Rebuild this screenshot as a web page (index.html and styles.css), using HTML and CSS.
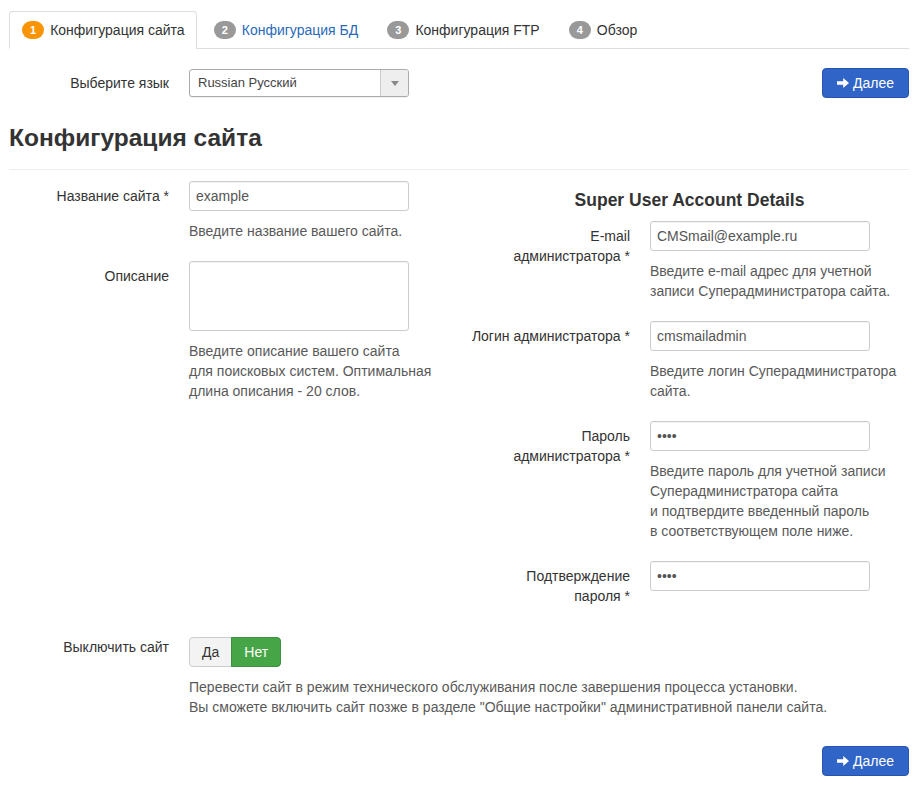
FILE: index.html
```html
<!DOCTYPE html>
<html lang="ru">
<head>
<meta charset="utf-8">
<title>Конфигурация сайта</title>
<link rel="stylesheet" href="styles.css">
</head>
<body>
<div class="page">
  <ul class="tabs">
    <li class="tab active"><span class="badge badge-warn">1</span>Конфигурация сайта</li>
    <li class="tab"><span class="badge">2</span><a class="tab-link" href="#">Конфигурация БД</a></li>
    <li class="tab"><span class="badge">3</span>Конфигурация FTP</li>
    <li class="tab"><span class="badge">4</span>Обзор</li>
  </ul>

  <div class="lang-row">
    <div class="inline-group">
      <label class="lbl lbl-plain">Выберите язык</label>
      <div class="select">
        <span class="select-text">Russian Русский</span>
        <span class="select-arrow"><span class="caret"></span></span>
      </div>
    </div>
    <button class="btn btn-primary" type="button">
      <svg class="arrow" width="12" height="10" viewBox="0 0 12 10"><path d="M0 3.3h6.2V0L12 5l-5.8 5V6.7H0z" fill="#fff"/></svg>
      Далее
    </button>
  </div>

  <h3 class="title">Конфигурация сайта</h3>
  <hr class="divider">

  <div class="cols">
    <div class="col col-left">
      <div class="group">
        <label class="lbl">Название сайта *</label>
        <div class="controls">
          <input class="field" type="text" value="example">
          <p class="help">Введите название вашего сайта.</p>
        </div>
      </div>
      <div class="group">
        <label class="lbl">Описание</label>
        <div class="controls">
          <textarea class="field area"></textarea>
          <p class="help">Введите описание вашего сайта<br>для поисковых систем. Оптимальная<br>длина описания - 20 слов.</p>
        </div>
      </div>
    </div>

    <div class="col col-right">
      <h4 class="sub">Super User Account Details</h4>
      <div class="group">
        <label class="lbl">E-mail<br>администратора *</label>
        <div class="controls">
          <input class="field" type="text" value="CMSmail@example.ru">
          <p class="help">Введите e-mail адрес для учетной<br>записи Суперадминистратора сайта.</p>
        </div>
      </div>
      <div class="group">
        <label class="lbl nowrap">Логин администратора *</label>
        <div class="controls">
          <input class="field" type="text" value="cmsmailadmin">
          <p class="help">Введите логин Суперадминистратора<br>сайта.</p>
        </div>
      </div>
      <div class="group">
        <label class="lbl">Пароль<br>администратора *</label>
        <div class="controls">
          <input class="field" type="password" value="1234">
          <p class="help">Введите пароль для учетной записи<br>Суперадминистратора сайта<br>и подтвердите введенный пароль<br>в соответствующем поле ниже.</p>
        </div>
      </div>
      <div class="group">
        <label class="lbl">Подтверждение<br>пароля *</label>
        <div class="controls">
          <input class="field" type="password" value="1234">
        </div>
      </div>
    </div>
  </div>

  <div class="group group-toggle">
    <label class="lbl lbl-plain">Выключить сайт</label>
    <div class="controls">
      <div class="btn-group">
        <button class="tbtn tbtn-off" type="button">Да</button>
        <button class="tbtn tbtn-on" type="button">Нет</button>
      </div>
      <p class="help">Перевести сайт в режим технического обслуживания после завершения процесса установки.<br>Вы сможете включить сайт позже в разделе "Общие настройки" административной панели сайта.</p>
    </div>
  </div>

  <div class="footer-row">
    <button class="btn btn-primary" type="button">
      <svg class="arrow" width="12" height="10" viewBox="0 0 12 10"><path d="M0 3.3h6.2V0L12 5l-5.8 5V6.7H0z" fill="#fff"/></svg>
      Далее
    </button>
  </div>
</div>
</body>
</html>
```

FILE: styles.css
```css
* { box-sizing: border-box; }

body {
  margin: 0;
  background: #fff;
  color: #333;
  font-family: "Liberation Sans", Arial, Helvetica, sans-serif;
  font-size: 14px;
  line-height: 20px;
}

.page {
  width: 909px;
  padding: 11px 0 0 9px;
}

/* tabs */
.tabs {
  display: flex;
  margin: 0;
  padding: 0;
  list-style: none;
  border-bottom: 1px solid #ddd;
}
.tab {
  display: flex;
  align-items: center;
  padding: 8px 11px 8px 12px;
  line-height: 20px;
  margin-right: 4px;
  margin-bottom: -1px;
  border: 1px solid transparent;
  border-radius: 4px 4px 0 0;
  color: #333;
}
.tab.active {
  background: #fff;
  border-color: #ddd #ddd transparent;
}
.tab-link {
  color: #2a69b8;
  text-decoration: none;
}
.badge {
  display: inline-block;
  padding: 2px 8px;
  margin-right: 6px;
  font-size: 11px;
  font-weight: bold;
  line-height: 14px;
  color: #fff;
  background: #999;
  border-radius: 9px;
}
.badge-warn { background: #f89406; }

/* language row */
.lang-row {
  display: flex;
  justify-content: space-between;
  align-items: center;
  margin-top: 19px;
}
.inline-group {
  display: flex;
  align-items: center;
}
.select {
  display: flex;
  width: 220px;
  height: 28px;
  border: 1px solid #aaa;
  border-radius: 3px;
  background: #fff;
  box-shadow: 0 1px 1px rgba(0,0,0,0.06);
  overflow: hidden;
}
.select-text {
  flex: 1;
  padding-left: 8px;
  line-height: 26px;
  font-size: 13px;
  color: #444;
}
.select-arrow {
  width: 28px;
  display: flex;
  align-items: center;
  justify-content: center;
  background: #eee;
  border-left: 1px solid #ccc;
}
.caret {
  width: 0;
  height: 0;
  border-top: 5px solid #888;
  border-left: 4px solid transparent;
  border-right: 4px solid transparent;
}

/* buttons */
.btn {
  display: inline-flex;
  align-items: center;
  gap: 4px;
  height: 30px;
  padding: 0 14px;
  font-family: inherit;
  font-size: 14px;
  border-radius: 4px;
  border: 1px solid;
  cursor: pointer;
}
.btn-primary {
  color: #fff;
  background: #3064c6;
  border-color: #2755ad;
}
.arrow { display: block; }

/* heading */
.title {
  margin: 25px 0 0;
  font-size: 24.5px;
  line-height: 30px;
  font-weight: bold;
  color: #333;
}
.divider {
  margin: 16px 0 0;
  border: 0;
  border-top: 1px solid #eee;
  height: 0;
}

/* columns */
.cols {
  display: flex;
  gap: 21px;
  margin-top: 11px;
}
.col-left { width: 440px; flex-shrink: 0; }
.col-right { flex: 1; }

.sub {
  margin: 9px 0 11px;
  font-size: 17.5px;
  line-height: 20px;
  font-weight: bold;
  text-align: center;
  color: #333;
}

.group {
  display: flex;
  margin-bottom: 20px;
}
.lbl {
  width: 160px;
  flex-shrink: 0;
  margin-right: 20px;
  padding-top: 5px;
  text-align: right;
  color: #333;
}
.nowrap { white-space: nowrap; }
.lbl-plain { padding-top: 0; }
.controls { flex: 1; }

.field {
  display: block;
  width: 220px;
  height: 30px;
  margin: 0;
  padding: 4px 6px;
  font-family: inherit;
  font-size: 14px;
  color: #555;
  background: #fff;
  border: 1px solid #ccc;
  border-radius: 3px;
  box-shadow: inset 0 1px 1px rgba(0,0,0,0.05);
  outline: none;
}
.area {
  height: 70px;
  resize: none;
}
.help {
  margin: 10px 0 0;
  color: #595959;
}

/* toggle */
.group-toggle {
  margin-top: 11px;
  margin-bottom: 0;
}
.btn-group { display: flex; }
.tbtn {
  height: 30px;
  padding: 0 12px;
  font-family: inherit;
  font-size: 14px;
  border: 1px solid;
  cursor: pointer;
}
.tbtn-off {
  color: #333;
  background: #f3f3f3;
  border-color: #ccc;
  border-radius: 4px 0 0 4px;
}
.tbtn-on {
  color: #fff;
  background: #46a546;
  border-color: #3d8f3d;
  border-radius: 0 4px 4px 0;
  margin-left: -1px;
}

.footer-row {
  display: flex;
  justify-content: flex-end;
  margin-top: 29px;
}
```
